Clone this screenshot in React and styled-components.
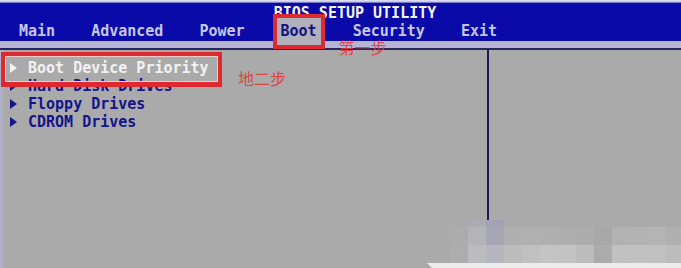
import React from "react";
import styled, { createGlobalStyle } from "styled-components";

const GlobalStyle = createGlobalStyle`
  *, *::before, *::after { box-sizing: border-box; }
  body {
    margin: 0;
    background: #aaaaaa;
  }
`;

const tabs = ["Main", "Advanced", "Power", "Boot", "Security", "Exit"];
const items = [
  "Boot Device Priority",
  "Hard Disk Drives",
  "Floppy Drives",
  "CDROM Drives",
];

// watermark mosaic, bottom right (13 columns of 18px from x=450)
const mosaic = [
  [null, "#ababb4", "#a2a2b2", null, null, null, null, null, null, null, null, null, null],
  ["#acacac", "#b3b3b8", "#a6a6b4", "#b0b0b0", "#b1b1b1", "#b0b0b0", "#aeaeae", "#acacac", "#a8a8a8", "#b2b2b2", "#b3b3b3", "#b4b4b4", "#b0b0b0"],
  ["#adadad", "#bcbcc0", "#b6b6c0", "#bcbcbc", "#c0c0c0", "#c4c4c4", "#c3c3c3", "#bcbcbc", "#ababab", "#c0c0c0", "#c1c1c1", "#c0c0c0", "#bcbcbc"],
];

const App = () => {
  return (
    <>
      <GlobalStyle />
      <Screen>
        <TopEdge />
        <Header>
          <Title>BIOS SETUP UTILITY</Title>
          <MenuBar>
            {tabs.map((t) => (
              <Tab key={t} $active={t === "Boot"}>
                {t}
                {t === "Boot" && <StepOne>第一步</StepOne>}
              </Tab>
            ))}
          </MenuBar>
        </Header>
        <Strip />
        <Rule />
        <Lower>
          <Body>
            <LeftPanel>
              {items.map((it, i) => (
                <Item key={it} $selected={i === 0}>
                  <Arrow />
                  {it}
                  {i === 0 && <StepTwo>地二步</StepTwo>}
                </Item>
              ))}
            </LeftPanel>
            <RightPanel />
          </Body>
        </Lower>
        <Mosaic>
          {mosaic.map((row, r) =>
            row.map((c, i) => <Cell key={r + "-" + i} $c={c} />)
          )}
        </Mosaic>
        <WhiteBand />
      </Screen>
    </>
  );
};

const Screen = styled.div`
  width: 681px;
  height: 268px;
  position: relative;
  overflow: hidden;
  display: flex;
  flex-direction: column;
  background: #aaaaaa;
  font-family: "DejaVu Sans Mono", "Liberation Mono", monospace;
  font-weight: bold;
  font-size: 15px;
`;
const TopEdge = styled.div`
  height: 3px;
  background: linear-gradient(#e8e8f6, #c4c4ea 55%, #5050c4);
`;
const Header = styled.div`
  height: 38px;
  background: #0a0aa8;
  display: flex;
  flex-direction: column;
`;
const Title = styled.div`
  height: 19px;
  padding-top: 1px;
  padding-left: 29px;
  line-height: 18px;
  text-align: center;
  color: #f4f4f4;
  white-space: pre;
`;
const MenuBar = styled.div`
  display: flex;
  gap: 36px;
  height: 19px;
  line-height: 19px;
  padding-left: 19px;
`;
const Tab = styled.div`
  position: relative;
  z-index: 2;
  color: ${(p) => (p.$active ? "#12127e" : "#c6c6f2")};
  ${(p) =>
    p.$active &&
    `
    background: #b0b0bc;
    padding: 4px;
    margin: -4px;
    box-shadow: 0 0 0 4px #dc2a30;
  `}
`;
const StepOne = styled.span`
  position: absolute;
  left: 62px;
  top: 21px;
  font-family: "Noto Sans CJK SC", sans-serif;
  font-weight: normal;
  font-size: 16px;
  line-height: 16px;
  color: #e53636;
  opacity: 0.85;
  white-space: nowrap;
`;
const Strip = styled.div`
  height: 7px;
  background: #b6b6d4;
`;
const Rule = styled.div`
  height: 2px;
  background: #26265e;
`;
const Lower = styled.div`
  flex: 1;
  border-left: 3px solid #b2b2c6;
`;
const Body = styled.div`
  display: flex;
  height: 170px;
`;
const LeftPanel = styled.div`
  width: 486px;
  border-right: 2px solid #1c1c58;
  padding: 9px 0 0 7px;
`;
const RightPanel = styled.div`
  flex: 1;
`;
const Item = styled.div`
  position: relative;
  display: flex;
  align-items: center;
  gap: 11px;
  height: 18px;
  line-height: 18px;
  white-space: pre;
  color: ${(p) => (p.$selected ? "#f2f2f2" : "#14148a")};
  ${(p) =>
    p.$selected &&
    `
    &::after {
      content: "";
      position: absolute;
      left: -9px;
      top: -7px;
      width: 221px;
      height: 35px;
      border: 4px solid #dc2a30;
      border-bottom-width: 5px;
      box-shadow: inset 0 0 0 1px #eccaca;
      z-index: 2;
    }
  `}
`;
const Arrow = styled.span`
  width: 0;
  height: 0;
  border-left: 7px solid currentColor;
  border-top: 5px solid transparent;
  border-bottom: 5px solid transparent;
`;
const StepTwo = styled.span`
  position: absolute;
  left: 228px;
  top: 11px;
  font-family: "Noto Sans CJK SC", sans-serif;
  font-weight: normal;
  font-size: 16px;
  line-height: 16px;
  color: #e23434;
  opacity: 0.85;
`;
const Mosaic = styled.div`
  position: absolute;
  left: 450px;
  top: 220px;
  display: grid;
  grid-template-columns: repeat(13, 18px);
  grid-template-rows: 7px 18px 18px;
`;
const Cell = styled.div`
  background: ${(p) => p.$c || "transparent"};
`;
const WhiteBand = styled.div`
  position: absolute;
  left: 427px;
  right: 0;
  bottom: 0;
  height: 5px;
  background: #ececec;
  clip-path: polygon(0 0, 100% 0, 100% 100%, 5px 100%);
`;

export default App;
